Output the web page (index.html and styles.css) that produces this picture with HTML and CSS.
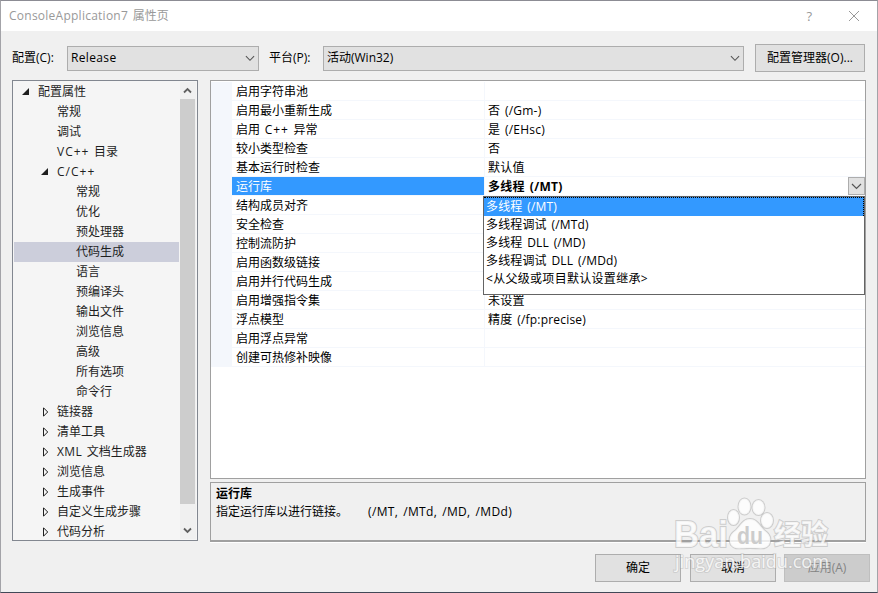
FILE: index.html
```
<!DOCTYPE html>
<html lang="zh-CN">
<head>
    <meta charset="utf-8">
    <title>ConsoleApplication7 属性页</title>
    <link rel="stylesheet" href="styles.css">
</head>
<body>
    <div class="window">
        <div class="titlebar">
            <span class="title"><span class="app">ConsoleApplication7</span> 属性页</span>
            <span class="help">?</span>
            <svg class="close" width="12" height="12" viewBox="0 0 12 12"><path d="M1 1L11 11M11 1L1 11"/></svg>
        </div>

        <div class="toolbar">
            <label class="config-label">配置(C):</label>
            <div class="combo config-combo"><span class="wide">Release</span><svg class="chevron" width="11" height="7" viewBox="0 0 11 7"><path d="M1 1L5.5 5.5L10 1"/></svg></div>
            <label class="platform-label">平台(P):</label>
            <div class="combo platform-combo"><span>活动(Win32)</span><svg class="chevron" width="11" height="7" viewBox="0 0 11 7"><path d="M1 1L5.5 5.5L10 1"/></svg></div>
            <button class="manager">配置管理器(O)...</button>
        </div>

        <div class="main">
            <div class="tree">
                <ul>
                    <li class="l1"><svg class="open" width="8" height="8"><path d="M7 0V7H0Z"/></svg>配置属性</li>
                    <li class="l2">常规</li>
                    <li class="l2">调试</li>
                    <li class="l2"><span><span class="plus">VC++</span> 目录</span></li>
                    <li class="l2"><svg class="open" width="8" height="8"><path d="M7 0V7H0Z"/></svg><span class="plus">C/C++</span></li>
                    <li class="l3">常规</li>
                    <li class="l3">优化</li>
                    <li class="l3">预处理器</li>
                    <li class="l3 selected">代码生成</li>
                    <li class="l3">语言</li>
                    <li class="l3">预编译头</li>
                    <li class="l3">输出文件</li>
                    <li class="l3">浏览信息</li>
                    <li class="l3">高级</li>
                    <li class="l3">所有选项</li>
                    <li class="l3">命令行</li>
                    <li class="l2"><svg class="closed" width="8" height="10"><path d="M.5 .8V9.2L4.7 5Z"/></svg>链接器</li>
                    <li class="l2"><svg class="closed" width="8" height="10"><path d="M.5 .8V9.2L4.7 5Z"/></svg>清单工具</li>
                    <li class="l2"><svg class="closed" width="8" height="10"><path d="M.5 .8V9.2L4.7 5Z"/></svg><span><span class="wide">XML</span> 文档生成器</span></li>
                    <li class="l2"><svg class="closed" width="8" height="10"><path d="M.5 .8V9.2L4.7 5Z"/></svg>浏览信息</li>
                    <li class="l2"><svg class="closed" width="8" height="10"><path d="M.5 .8V9.2L4.7 5Z"/></svg>生成事件</li>
                    <li class="l2"><svg class="closed" width="8" height="10"><path d="M.5 .8V9.2L4.7 5Z"/></svg>自定义生成步骤</li>
                    <li class="l2"><svg class="closed" width="8" height="10"><path d="M.5 .8V9.2L4.7 5Z"/></svg>代码分析</li>
                </ul>
                <div class="scrollbar">
                    <svg width="9" height="7" viewBox="0 0 9 7"><path d="M1 5.5L4.5 2L8 5.5"/></svg>
                    <div class="thumb"></div>
                    <svg width="9" height="7" viewBox="0 0 9 7"><path d="M1 1.5L4.5 5L8 1.5"/></svg>
                </div>
            </div>

            <div class="right">
                <div class="grid">
                    <div class="row"><span class="name">启用字符串池</span><span class="value"></span></div>
                    <div class="row"><span class="name">启用最小重新生成</span><span class="value">否 (/Gm-)</span></div>
                    <div class="row"><span class="name">启用 <span class="plus">C++</span> 异常</span><span class="value">是 (/EHsc)</span></div>
                    <div class="row"><span class="name">较小类型检查</span><span class="value">否</span></div>
                    <div class="row"><span class="name">基本运行时检查</span><span class="value">默认值</span></div>
                    <div class="row current">
                        <span class="name">运行库</span><span class="value">多线程 (/MT)</span>
                        <span class="drop"><svg class="chevron" width="11" height="7" viewBox="0 0 11 7"><path d="M1 1L5.5 5.5L10 1"/></svg></span>
                        <div class="popup">
                            <div class="item active">多线程 (/MT)</div>
                            <div class="item">多线程调试 (/MTd)</div>
                            <div class="item">多线程 DLL (/MD)</div>
                            <div class="item">多线程调试 DLL (/MDd)</div>
                            <div class="item wide">&lt;从父级或项目默认设置继承&gt;</div>
                        </div>
                    </div>
                    <div class="row"><span class="name">结构成员对齐</span><span class="value"></span></div>
                    <div class="row"><span class="name">安全检查</span><span class="value"></span></div>
                    <div class="row"><span class="name">控制流防护</span><span class="value"></span></div>
                    <div class="row"><span class="name">启用函数级链接</span><span class="value"></span></div>
                    <div class="row"><span class="name">启用并行代码生成</span><span class="value"></span></div>
                    <div class="row"><span class="name">启用增强指令集</span><span class="value">未设置</span></div>
                    <div class="row"><span class="name">浮点模型</span><span class="value">精度 (/fp:precise)</span></div>
                    <div class="row"><span class="name">启用浮点异常</span><span class="value"></span></div>
                    <div class="row"><span class="name">创建可热修补映像</span><span class="value"></span></div>
                </div>
                <div class="description">
                    <b>运行库</b>
                    <p><span>指定运行库以进行链接。</span><span class="wide">(/MT, /MTd, /MD, /MDd)</span></p>
                </div>
            </div>
        </div>

        <div class="buttons">
            <button>确定</button>
            <button>取消</button>
            <button class="apply" disabled>应用(A)</button>
        </div>

        <svg class="watermark" width="170" height="85" viewBox="0 0 170 85">
            <g class="mark">
                <text class="logo" x="5" y="53" textLength="54" lengthAdjust="spacingAndGlyphs">Bai</text>
                <ellipse cx="64.500" cy="23.500" rx="5.500" ry="7.500"/>
                <ellipse cx="75.500" cy="12.500" rx="6" ry="8"/>
                <ellipse cx="89.500" cy="13.500" rx="6" ry="7.500"/>
                <ellipse cx="98" cy="26.500" rx="6" ry="7.500"/>
                <path d="M81 25C88 25 90 31 95 36C101 40 103 45 100 51C96 56 91 54 81 54C71 54 66 56 62 51C59 45 61 40 67 36C72 31 74 25 81 25Z"/>
                <text class="logo cn" x="105" y="51" textLength="54" lengthAdjust="spacingAndGlyphs">经验</text>
                <text class="url" x="6" y="74" textLength="154" lengthAdjust="spacingAndGlyphs">jingyan.baidu.com</text>
            </g>
            <text class="du" x="68" y="50" textLength="26" lengthAdjust="spacingAndGlyphs">du</text>
        </svg>
    </div>
</body>
</html>
```
FILE: styles.css
```
* {
    box-sizing: border-box;
}

body {
    margin: 0;
    font: 12px/18px "Open Sans", "Noto Sans CJK SC", sans-serif;
    word-spacing: 1.5px;
    color: #000;
}

ul, p {
    margin: 0;
    padding: 0;
    list-style: none;
}

svg {
    fill: none;
    flex: none;
}

.wide {
    letter-spacing: .35px;
}

.plus {
    letter-spacing: 1px;
}

.app {
    letter-spacing: .25px;
}

.window {
    position: relative;
    width: 878px;
    height: 593px;
    overflow: hidden;
    background: #f0f0f0;
    border: 1px solid #a3a3a8;
    border-top-color: #8c8c94;
    border-bottom-color: #414857;
}

.titlebar {
    display: flex;
    align-items: center;
    height: 30px;
    padding: 0 17px 0 8px;
    background: #fff;
    color: #999;
}

.title {
    flex: 1;
}

.help {
    margin-right: 36px;
    font-size: 13px;
}

.close {
    stroke: #999;
}

.toolbar {
    display: flex;
    align-items: center;
    height: 28px;
    margin-top: 13px;
    padding-left: 11px;
}

.config-label {
    width: 55px;
}

.platform-label {
    width: 54px;
    margin-left: 10px;
}

.combo {
    display: flex;
    align-items: center;
    justify-content: space-between;
    height: 25px;
    padding: 0 3px;
    background: #e1e1e1;
    border: 1px solid #adadad;
}

.config-combo {
    width: 192px;
}

.platform-combo {
    width: 421px;
}

.chevron {
    stroke: #555;
    stroke-width: 1.2;
}

.combo .chevron {
    width: 10px;
}

button {
    height: 28px;
    padding: 0;
    background: #e1e1e1;
    border: 1px solid #adadad;
    font: inherit;
    color: #000;
}

.manager {
    width: 110px;
    margin-left: 11px;
}

.main {
    display: flex;
    gap: 12px;
    margin: 8px 0 0 11px;
}

/* tree */
.tree {
    display: flex;
    width: 186px;
    height: 461px;
    padding: 1px;
    overflow: hidden;
    background: #f5f5f5;
    border: 1px solid #828790;
    color: #1e1e1e;
}

.tree ul {
    flex: none;
    width: 165px;
}

.tree li {
    display: flex;
    align-items: center;
    height: 20px;
    white-space: nowrap;
}

.l1 {
    padding-left: 8px;
}

.l2 {
    padding-left: 43px;
}

.l3 {
    padding-left: 62px;
}

.selected {
    background: #cccedb;
}

.open {
    margin-right: 8px;
    fill: #1e1e1e;
}

.closed {
    margin-right: 6px;
    stroke: #1e1e1e;
}

.l2 .open {
    margin-left: -16px;
}

.l2 .closed {
    margin-left: -14px;
}

.scrollbar {
    display: flex;
    flex-direction: column;
    align-items: center;
    width: 16px;
    margin-left: 1px;
    padding: 5px 1px 0 0;
    background: #f0f0f0;
    stroke: #606060;
    stroke-width: 1.8;
}

.thumb {
    flex: none;
    width: 15px;
    height: 405px;
    margin: 5px 0 23px;
    background: #cdcdcd;
}

/* property grid */
.right {
    width: 656px;
}

.grid {
    height: 399px;
    padding-top: 1px;
    background: #fff;
    border: 1px solid #a0a0a0;
}

.row {
    position: relative;
    display: flex;
    height: 19px;
    line-height: 20px;
    border-left: 21px solid #f4f7fc;
    border-bottom: 1px solid #f4f7fc;
}

.name {
    width: 252px;
    padding-left: 4px;
}

.value {
    flex: 1;
    padding-left: 3px;
    border-left: 1px solid #f4f7fc;
    letter-spacing: .2px;
}

.current .name {
    background: #3399ff;
    color: #fff;
}

.current .value {
    font-weight: bold;
    letter-spacing: .3px;
}

.drop {
    display: flex;
    align-items: center;
    justify-content: center;
    width: 17px;
    background: #e1e1e1;
    border: 1px solid #adadad;
}

.popup {
    position: absolute;
    top: 19px;
    right: 0;
    z-index: 1;
    width: 382px;
    height: 99px;
    background: #fff;
    border: 1px solid #646464;
    line-height: 18px;
}

.item {
    height: 18px;
    padding-left: 2px;
    letter-spacing: .15px;
}

.item.wide {
    letter-spacing: .3px;
}

.item.active {
    height: 19px;
    background: #3399ff;
    border-top: 1px dotted #000;
    border-right: 1px dotted #000;
    color: #fff;
}

.description {
    height: 60px;
    margin-top: 3px;
    padding: 2px 5px;
    border: 1px solid #a0a0a0;
    border-bottom-width: 2px;
    box-shadow: 0 1px #fff;
}

.description b {
    display: block;
}

.description span {
    margin-right: 20px;
}

.buttons {
    display: flex;
    justify-content: flex-end;
    gap: 9px;
    margin: 12px 7px 0 0;
}

.buttons button {
    width: 86px;
}

.buttons .apply {
    margin-left: -1px;
    background: #ccc;
    border-color: #bfbfbf;
    color: #838383;
}

.watermark {
    position: absolute;
    left: 668px;
    top: 493px;
    z-index: 2;
    word-spacing: 0;
    pointer-events: none;
}

.mark {
    fill: #fff;
    fill-opacity: .8;
    stroke: #aaa;
    stroke-opacity: .5;
    stroke-width: 2;
    paint-order: stroke;
}

.logo {
    font: bold 36px "Liberation Sans", sans-serif;
}

.cn {
    font: bold 28px "Noto Sans CJK SC", sans-serif;
}

.url {
    font: 18px "Open Sans", sans-serif;
    stroke-opacity: .35;
}

.du {
    font: bold 24px "Liberation Sans", sans-serif;
    fill: #ccc;
}
```
